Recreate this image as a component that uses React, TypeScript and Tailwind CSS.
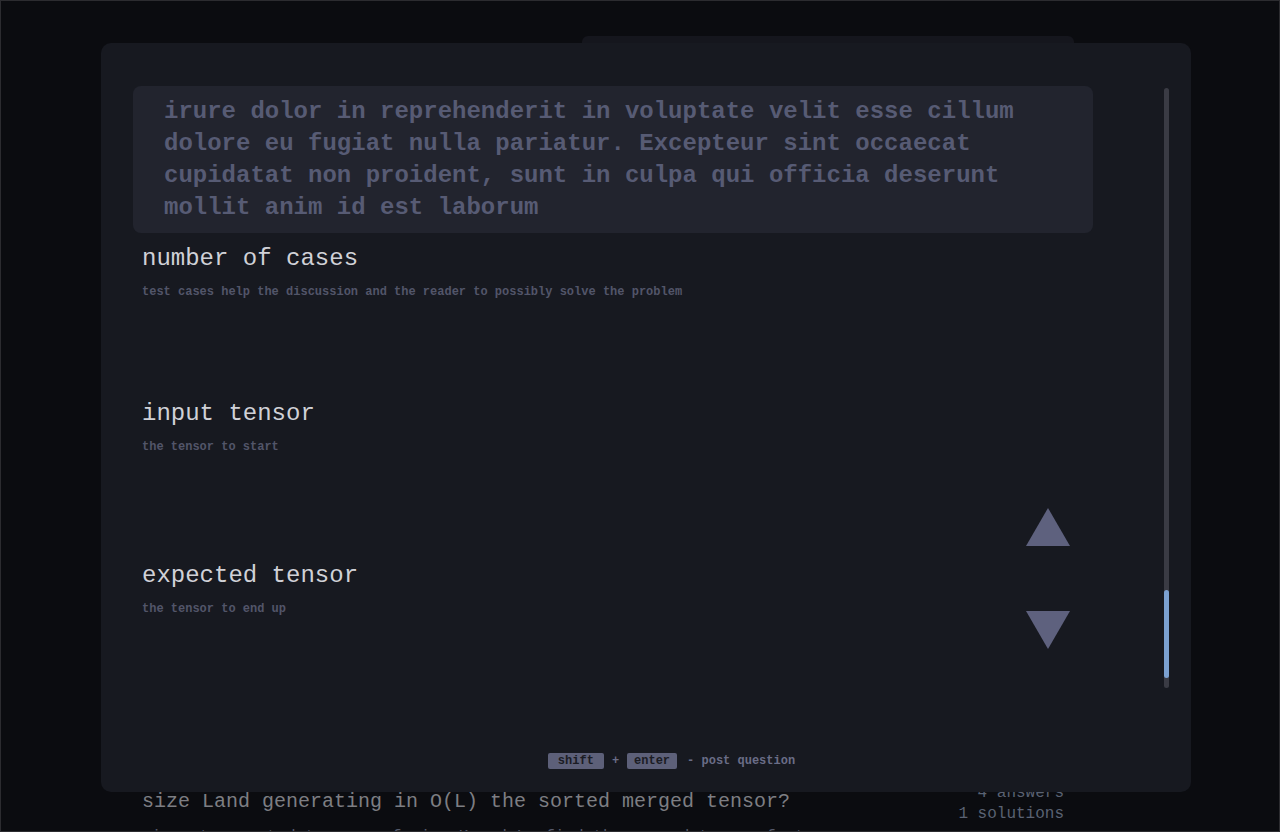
import { ReactNode } from "react";

const mono = { fontFamily: '"Liberation Mono", "DejaVu Sans Mono", monospace' };

interface Question {
    title: string;
    detail: string;
    answers: number;
    solutions: number;
}

const questions: Question[] = [
    { title: "merge two sorted tensors without extra memory", detail: "is it possible to do it in place?", answers: 2, solutions: 0 },
    { title: "fastest way to transpose a sparse tensor", detail: "looking for something better than the naive loop", answers: 5, solutions: 1 },
    { title: "count inversions in a flattened tensor", detail: "the tensor can be very large", answers: 1, solutions: 1 },
    { title: "rotate a tensor by k positions", detail: "without allocating a second tensor", answers: 3, solutions: 0 },
    { title: "find the median of two sorted tensors", detail: "expected time is logarithmic", answers: 6, solutions: 2 },
    { title: "reshape a tensor keeping the stride order", detail: "strides must not be recomputed", answers: 0, solutions: 0 },
    { title: "size Land generating in O(L) the sorted merged tensor?", detail: "given two sorted tensors of size K and L, find the merged tensor fast", answers: 4, solutions: 1 },
];

function QuestionRow({ q }: { q: Question }) {
    return (
        <div className="flex justify-between items-start h-[116px]">
            <div className="flex flex-col">
                <span className="mt-[7px] text-[20px] leading-[28px] text-[#7d7e83]">{q.title}</span>
                <span className="mt-[11px] text-[16px] leading-[21px] text-[#55596a]">{q.detail}</span>
            </div>
            <div className="mt-[2px] flex flex-col items-end text-[16px] leading-[21px] text-[#5a6273]">
                <span>{q.answers} answers</span>
                <span>{q.solutions} solutions</span>
            </div>
        </div>
    );
}

function Field({ title, hint, className, children }: { title: string; hint: string; className?: string; children?: ReactNode }) {
    return (
        <div className={"flex justify-between items-start px-[9px] " + (className ?? "")}>
            <div className="flex flex-col">
                <span className="text-[24px] leading-[32px] text-[#d0d1d7]">{title}</span>
                <span className="mt-[9px] text-[12px] leading-[16px] font-bold text-[#525569]">{hint}</span>
            </div>
            {children}
        </div>
    );
}

function Kbd({ label, className }: { label: string; className?: string }) {
    return (
        <span className={"h-4 flex items-center justify-center rounded-[2px] bg-[#5d6079] text-[12px] font-bold text-[#1b1c24] " + (className ?? "")}>
            {label}
        </span>
    );
}

export default function App() {
    return (
        <div style={mono} className="relative w-[1280px] h-[832px] overflow-hidden bg-[#0b0c10] border border-[#2c2c30]">
            {/* page behind the dialog */}
            <div className="flex flex-col pl-[141px] pr-[215px]">
                <div className="mt-[35px] ml-[440px] w-[492px] h-12 rounded-[6px] bg-[#15161d]" />
                <div className="mt-px flex flex-col">
                    {questions.map(q => (
                        <QuestionRow key={q.title} q={q} />
                    ))}
                </div>
            </div>

            {/* new question dialog */}
            <div className="absolute left-[100px] top-[42px] w-[1090px] h-[749px] rounded-[10px] bg-[#171920] flex flex-col">
                <div className="flex pl-[32px] pt-[43px]">
                    <div className="flex flex-col w-[960px]">
                        <div className="rounded-[8px] bg-[#22242e] pl-[31px] pr-4 pt-[10px] pb-[9px] text-[24px] leading-[32px] font-bold text-[#575b74]">
                            <span className="block">irure dolor in reprehenderit in voluptate velit esse cillum</span>
                            <span className="block">dolore eu fugiat nulla pariatur. Excepteur sint occaecat</span>
                            <span className="block">cupidatat non proident, sunt in culpa qui officia deserunt</span>
                            <span className="block">mollit anim id est laborum</span>
                        </div>
                        <Field className="mt-[10px]" title="number of cases" hint="test cases help the discussion and the reader to possibly solve the problem" />
                        <Field className="mt-[98px]" title="input tensor" hint="the tensor to start" />
                        <div className="mt-[54px] flex justify-between items-start pl-[9px] pr-[23px]">
                            <div className="flex flex-col mt-[51px]">
                                <span className="text-[24px] leading-[32px] text-[#d0d1d7]">expected tensor</span>
                                <span className="mt-[9px] text-[12px] leading-[16px] font-bold text-[#525569]">the tensor to end up</span>
                            </div>
                            <div className="-mt-px flex flex-col gap-[65px]">
                                <svg width="44" height="38" viewBox="0 0 44 38">
                                    <path d="M22 0 L44 38 L0 38 Z" fill="#5e617e" />
                                </svg>
                                <svg width="44" height="38" viewBox="0 0 44 38">
                                    <path d="M0 0 L44 0 L22 38 Z" fill="#5e617e" />
                                </svg>
                            </div>
                        </div>
                    </div>
                    <div className="ml-[71px] mt-[2px] w-[5px] h-[600px] rounded-full bg-[#3a3b44] flex flex-col">
                        <div className="mt-[502px] h-[88px] rounded-full bg-[#7ba0d0]" />
                    </div>
                </div>
                <div className="mt-auto mb-[22px] flex justify-center items-center pl-[51px] text-[12px] font-bold text-[#6a6d87]">
                    <Kbd label="shift" className="w-[56px]" />
                    <span className="mx-[8px]">+</span>
                    <Kbd label="enter" className="w-[50px]" />
                    <span className="ml-[10px]">- post question</span>
                </div>
            </div>
        </div>
    );
}
